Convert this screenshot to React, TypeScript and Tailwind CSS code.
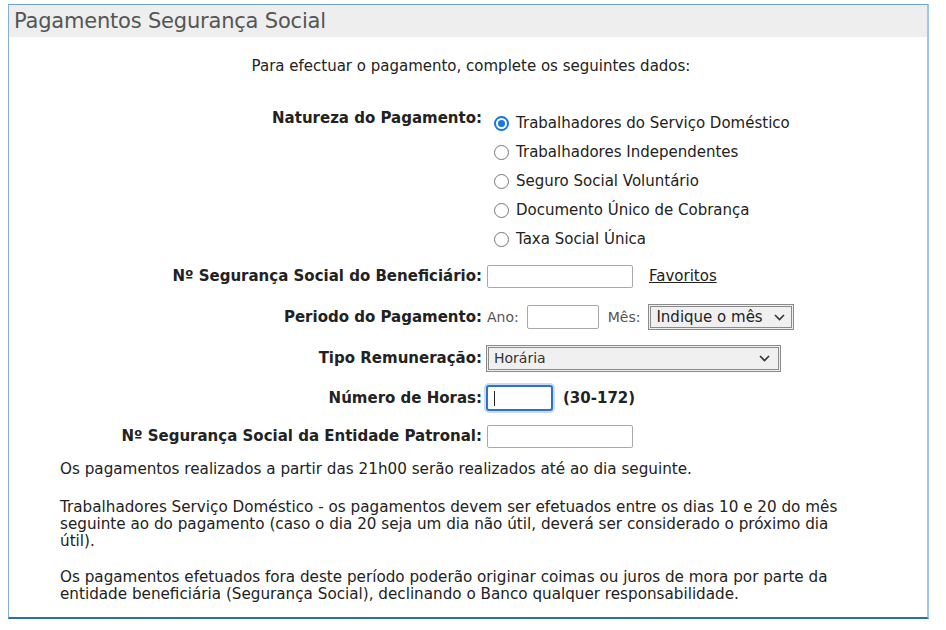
import React from "react";

const font = { fontFamily: '"DejaVu Sans", Verdana, sans-serif' };

function Radio({ checked, label }: { checked?: boolean; label: string }) {
  return (
    <div className="flex items-center h-[29px]">
      {checked ? (
        <span className="w-[15px] h-[15px] rounded-full border-[2px] border-[#1a73e8] flex items-center justify-center bg-white">
          <span className="w-[7px] h-[7px] rounded-full bg-[#1a73e8]" />
        </span>
      ) : (
        <span className="w-[15px] h-[15px] rounded-full border border-[#767676] bg-white" />
      )}
      <span className="ml-[7px] text-[15px] text-[#222]">{label}</span>
    </div>
  );
}

function Chevron() {
  return (
    <svg width="11" height="7" viewBox="0 0 11 7" className="shrink-0">
      <path d="M1 1l4.5 4.5L10 1" fill="none" stroke="#333" strokeWidth="1.6" />
    </svg>
  );
}

function Row({ label, children, h }: { label: string; children: React.ReactNode; h: string }) {
  return (
    <div className={`flex items-center ${h}`}>
      <div className="w-[474px] shrink-0 text-right font-bold text-[15px] text-[#222] pr-[1px]">{label}</div>
      <div className="flex items-center">{children}</div>
    </div>
  );
}

export default function App() {
  return (
    <div className="w-[946px] h-[630px] bg-white pt-[4px] pl-[8px]" style={font}>
      <div className="w-[921px] h-[615px] border border-[#7fb1dc] border-b-[#2a6fb0] border-b-2 border-t-[#6aa3d4] border-r-2 border-r-[#9cc7ea] flex flex-col">
        <div className="h-[32px] bg-[#eeeeee] flex items-center pl-[5px] pt-[1px]">
          <span className="text-[21px] text-[#555] tracking-[-0.2px]">Pagamentos Segurança Social</span>
        </div>
        <div className="text-center text-[15px] text-[#222] mt-[18px] pl-[6px]">
          Para efectuar o pagamento, complete os seguintes dados:
        </div>

        <div className="flex mt-[28px]">
          <div className="w-[474px] shrink-0 text-right font-bold text-[15px] text-[#222] pr-[1px] pt-[1px]">
            Natureza do Pagamento:
          </div>
          <div className="flex flex-col pl-[11px] mt-[3px]">
            <Radio checked label="Trabalhadores do Serviço Doméstico" />
            <Radio label="Trabalhadores Independentes" />
            <Radio label="Seguro Social Voluntário" />
            <Radio label="Documento Único de Cobrança" />
            <Radio label="Taxa Social Única" />
          </div>
        </div>

        <Row label="Nº Segurança Social do Beneficiário:" h="h-[40px] mt-[3px]">
          <div className="w-[146px] h-[23px] border border-[#a9a9a9] rounded-[2px] bg-white ml-[4px]" />
          <span className="ml-[16px] text-[15px] text-[#222] underline">Favoritos</span>
        </Row>

        <Row label="Periodo do Pagamento:" h="h-[41px]">
          <span className="ml-[4px] text-[14px] text-[#555]">Ano:</span>
          <div className="w-[72px] h-[24px] border border-[#a9a9a9] rounded-[2px] bg-white ml-[8px]" />
          <span className="ml-[9px] text-[14px] text-[#555]">Mês:</span>
          <div className="ml-[8px] w-[146px] h-[26px] border-[3px] border-double border-[#8a8a8a] bg-[#f0f0f0] flex items-center justify-between pl-[5px] pr-[6px]">
            <span className="text-[15px] text-[#222]">Indique o mês</span>
            <Chevron />
          </div>
        </Row>

        <Row label="Tipo Remuneração:" h="h-[41px]">
          <div className="ml-[3px] w-[295px] h-[27px] border-[3px] border-double border-[#8a8a8a] bg-[#f0f0f0] flex items-center justify-between pl-[5px] pr-[8px]">
            <span className="text-[14px] text-[#333]">Horária</span>
            <Chevron />
          </div>
        </Row>

        <Row label="Número de Horas:" h="h-[39px]">
          <div className="ml-[3px] w-[67px] h-[26px] border-2 border-[#2f6fd0] rounded-[3px] bg-white shadow-[0_0_0_2px_#c9dcf5] flex items-center pl-[6px]">
            <span className="w-[1px] h-[15px] bg-[#222]" />
          </div>
          <span className="ml-[10px] font-bold text-[15px] text-[#222]">(30-172)</span>
        </Row>

        <Row label="Nº Segurança Social da Entidade Patronal:" h="h-[38px]">
          <div className="w-[146px] h-[23px] border border-[#a9a9a9] rounded-[2px] bg-white ml-[4px]" />
        </Row>

        <div className="pl-[51px] text-[15.2px] text-[#222] leading-[17px] mt-[5px] whitespace-nowrap">
          <p>Os pagamentos realizados a partir das 21h00 serão realizados até ao dia seguinte.</p>
          <p className="mt-[21px]">
            Trabalhadores Serviço Doméstico - os pagamentos devem ser efetuados entre os dias 10 e 20 do mês
            <br />
            seguinte ao do pagamento (caso o dia 20 seja um dia não útil, deverá ser considerado o próximo dia
            <br />
            útil).
          </p>
          <p className="mt-[19px]">
            Os pagamentos efetuados fora deste período poderão originar coimas ou juros de mora por parte da
            <br />
            entidade beneficiária (Segurança Social), declinando o Banco qualquer responsabilidade.
          </p>
        </div>
      </div>
    </div>
  );
}
